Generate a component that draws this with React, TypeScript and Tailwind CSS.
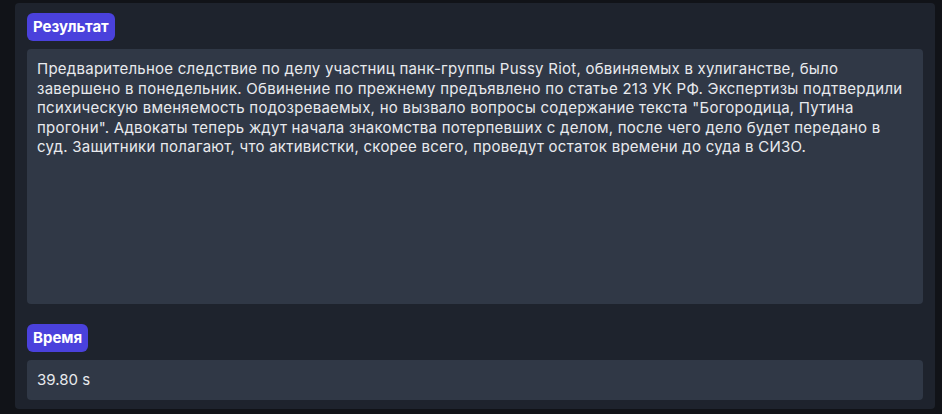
const lines = [
  'Предварительное следствие по делу участниц панк-группы Pussy Riot, обвиняемых в хулиганстве, было',
  'завершено в понедельник. Обвинение по прежнему предъявлено по статье 213 УК РФ. Экспертизы подтвердили',
  'психическую вменяемость подозреваемых, но вызвало вопросы содержание текста "Богородица, Путина',
  'прогони". Адвокаты теперь ждут начала знакомства потерпевших с делом, после чего дело будет передано в',
  'суд. Защитники полагают, что активистки, скорее всего, проведут остаток времени до суда в СИЗО.',
];

function Badge({ label }: { label: string }) {
  return (
    <span className="inline-flex h-[28px] items-center self-start rounded-[6px] bg-[#4a41dc] px-[6px] text-[15px] font-bold text-white">
      {label}
    </span>
  );
}

export default function App() {
  return (
    <div
      className="h-[414px] w-[942px] bg-[#111318] pt-[3px] pl-[15px]"
      style={{ fontFamily: 'Inter, "Noto Sans", sans-serif' }}
    >
      <div className="flex h-[406px] w-[920px] flex-col rounded-[4px] bg-[#1e232d] px-[12px] pt-[10px]">
        <Badge label="Результат" />
        <div className="mt-[8px] h-[255px] rounded-[4px] bg-[#303846] p-[10px] text-[15px] leading-[19.5px] tracking-[0.25px] text-[#e8eaee]">
          {lines.map((line) => (
            <div key={line} className="whitespace-nowrap">
              {line}
            </div>
          ))}
        </div>
        <div className="mt-[20px] flex">
          <Badge label="Время" />
        </div>
        <div className="mt-[8px] h-[40px] rounded-[4px] bg-[#303846] px-[10px] py-[10px] text-[15px] leading-[20px] text-[#e8eaee]">
          39.80 s
        </div>
      </div>
    </div>
  );
}
